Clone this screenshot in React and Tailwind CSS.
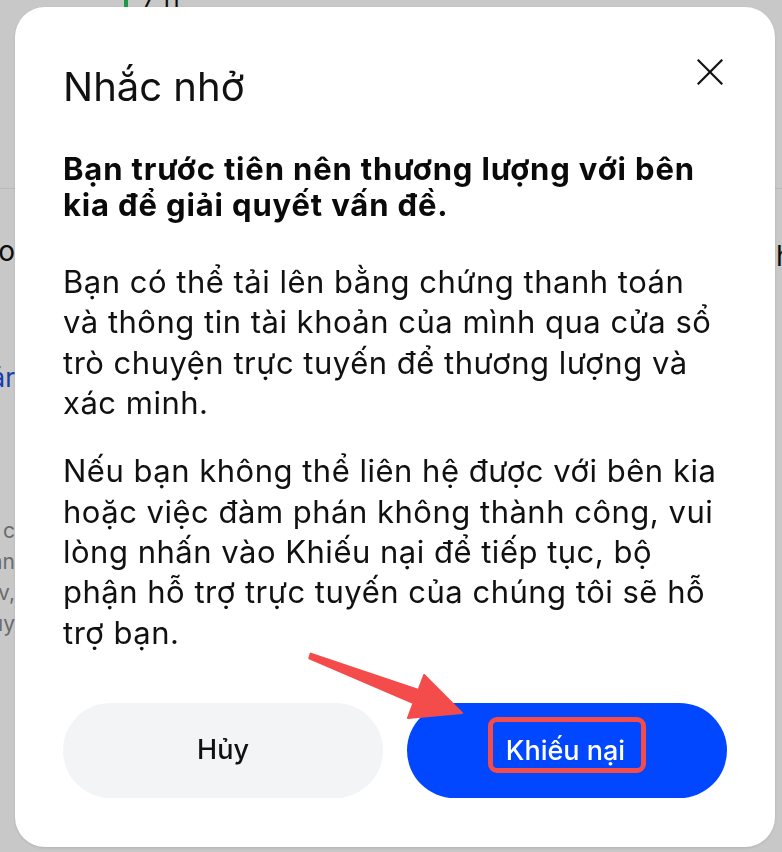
import { useState } from 'react';

function CloseIcon() {
    return (
        <svg width="26" height="26" viewBox="0 0 26 26" fill="none" stroke="#111" strokeWidth="2.2" strokeLinecap="square">
            <path d="M1.5 1.5 L24.5 24.5" />
            <path d="M24.5 1.5 L1.5 24.5" />
        </svg>
    );
}

function ArrowMark() {
    // red annotation arrow drawn over the dialog
    return (
        <svg className="pointer-events-none absolute left-0 top-0" width="782" height="852" viewBox="0 0 782 852">
            <polygon
                points="310.7,653.6 418.5,690 424.1,675 462,713 407.9,718 413.5,703 309.3,658.4"
                fill="#f44b4b"
                stroke="#f44b4b"
                strokeWidth="2"
                strokeLinejoin="round"
            />
        </svg>
    );
}

function BackgroundPage() {
    return (
        <div className="flex h-[852px] w-full overflow-hidden bg-white font-['Inter',sans-serif]">
            <div className="flex w-[15px] flex-col">
                <div className="h-[188px]" />
                <div className="h-px bg-[#ececec]" />
                <div className="mt-[44px] flex justify-end whitespace-nowrap text-[28px] leading-[36px] text-[#111]">Trạng thái: Đã hoàn thành đơn số Mo</div>
                <div className="mt-[92px] flex justify-end whitespace-nowrap text-[26px] leading-[34px] text-[#1d4ed8]">Xem chi tiết ngân hàng Nam ár</div>
                <div className="mt-[120px] flex flex-col text-[21px] leading-[31px] text-[#8a8a8a]">
                    <div className="flex justify-end whitespace-nowrap">Sau khi bạn đã chuyển tiền, vui lòng c</div>
                    <div className="flex justify-end whitespace-nowrap">nhấn nút xác nhận bên dưới để thông bán</div>
                    <div className="flex justify-end whitespace-nowrap">người bán, nếu có vấn đề hãy liên hệ v,</div>
                    <div className="flex justify-end whitespace-nowrap">hỗ trợ trực tuyến để được hướng dẫn cụ thể uy</div>
                </div>
            </div>
            <div className="flex flex-1 flex-col">
                <div className="-mt-[10px] flex items-start gap-3 pl-[109px]">
                    <div className="mt-[4px] h-[14px] w-[4px] bg-[#22c55e]" />
                    <span className="text-[24px] leading-[28px] text-[#111]">7 11</span>
                </div>
            </div>
            <div className="flex w-[7px] flex-col">
                <div className="h-[188px]" />
                <div className="h-px bg-[#ececec]" />
                <div className="mt-[52px] flex whitespace-nowrap text-[28px] leading-[30px] text-[#111]">
                    <span className="ml-[1px]">hàng</span>
                </div>
            </div>
        </div>
    );
}

export default function App() {
    const [open, setOpen] = useState(true);

    return (
        <div className="relative h-[852px] w-[782px] overflow-hidden font-['Inter',sans-serif]">
            <BackgroundPage />

            {open && (
                <div className="fixed inset-0 bg-black/[0.215]">
                    <div className="ml-[15px] mt-[7px] flex h-[840px] w-[760px] flex-col rounded-[30px] bg-white px-12 shadow-[0_1px_3px_rgba(0,0,0,0.12)]">
                        <div className="flex items-start justify-between">
                            <h3 className="mt-[57px] text-[40px] font-normal leading-[46px] text-[#111]">Nhắc nhở</h3>
                            <button type="button" onClick={() => setOpen(false)} className="mr-[4px] mt-[52px]">
                                <span className="sr-only">Close</span>
                                <CloseIcon />
                            </button>
                        </div>

                        <p className="mt-[41px] whitespace-nowrap text-[31px] font-bold leading-[36px] tracking-[0.85px] text-[#0a0a0a]">
                            Bạn trước tiên nên thương lượng với bên<br />
                            kia để giải quyết vấn đề.
                        </p>

                        <p className="mt-[39px] whitespace-nowrap text-[31px] leading-[40.4px] tracking-[0.5px] text-[#111]">
                            Bạn có thể tải lên bằng chứng thanh toán<br />
                            và thông tin tài khoản của mình qua cửa sổ<br />
                            trò chuyện trực tuyến để thương lượng và<br />
                            xác minh.
                        </p>

                        <p className="mt-[27.5px] whitespace-nowrap text-[31px] leading-[40.4px] tracking-[0.5px] text-[#111]">
                            Nếu bạn không thể liên hệ được với bên kia<br />
                            hoặc việc đàm phán không thành công, vui<br />
                            lòng nhấn vào Khiếu nại để tiếp tục, bộ<br />
                            phận hỗ trợ trực tuyến của chúng tôi sẽ hỗ<br />
                            trợ bạn.
                        </p>

                        <div className="mt-[50px] flex gap-6">
                            <button type="button" onClick={() => setOpen(false)} className="flex h-[95px] flex-1 items-center justify-center rounded-full bg-[#f3f4f6] text-[27px] font-medium text-[#111]">
                                Hủy
                            </button>
                            <button type="button" className="flex h-[95px] flex-1 items-center justify-center rounded-full bg-[#0047ff] text-[27px] font-medium text-white">
                                <span className="mb-[12px] box-border h-[56px] rounded-[9px] border-[5px] border-[#f44b4b] pl-[13px] pr-[16px] pt-[9px] leading-[40px]">Khiếu nại</span>
                            </button>
                        </div>
                    </div>
                    <ArrowMark />
                </div>
            )}
        </div>
    );
}
